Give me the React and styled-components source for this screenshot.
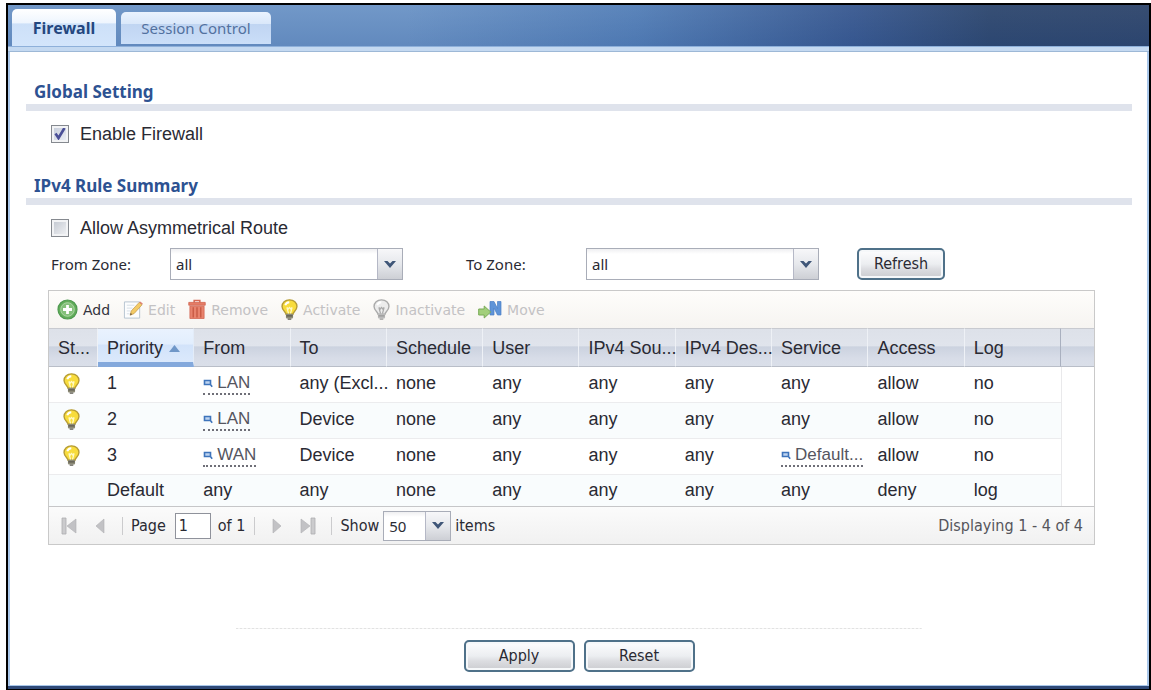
import React, { useState } from 'react';
import styled, { createGlobalStyle, css } from 'styled-components';

const tahoma = '"DejaVu Sans Condensed", "Noto Sans", sans-serif';
const verdana = '"DejaVu Sans", sans-serif';
const noto = '"Noto Sans", sans-serif';
const arial = '"Liberation Sans", Arial, sans-serif';

const GlobalStyle = createGlobalStyle`
  * { box-sizing: border-box; }
  body { margin: 0; background: #fff; color: #2a2a33; font-family: ${arial}; }
  button, input, select { font: inherit; color: inherit; margin: 0; }
`;

const Page = styled.div`
  display: flex;
  min-height: 100vh;
  padding: 3px 0 0 6px;
`;

const Frame = styled.div`
  flex: 1;
  min-width: 0;
  display: flex;
  flex-direction: column;
  border: 2px solid #000;
  border-bottom-width: 1px;
`;

const TabBar = styled.nav`
  display: flex;
  align-items: flex-end;
  gap: 5px;
  height: 41px;
  padding: 0 4px;
  background:
    linear-gradient(180deg, rgba(255, 255, 255, 0.04), rgba(20, 60, 130, 0.12)),
    linear-gradient(90deg, #6c94c6 0%, #6c94c6 35%, #5580b8 55%, #3a5a91 74%, #2f486f 86%, #2f466c 100%);
`;

const Tab = styled.button`
  border: 0;
  border-radius: 5px 5px 0 0;
  font-family: ${noto};
  text-align: center;
  cursor: pointer;
  ${(p) => p.$active ? css`
    width: 104px;
    height: 37px;
    font-size: 16px;
    font-weight: 700;
    color: #24477f;
    background: linear-gradient(180deg, #fff 0, #eef5fe 38%, #cde0f8 40%, #d3e5fb 100%);
  ` : css`
    width: 150px;
    height: 32px;
    margin-bottom: 2px;
    font-size: 15px;
    color: #52719f;
    background: linear-gradient(180deg, #eaf3fe 0, #dae8fa 36%, #c0d5f2 38%, #cadef8 100%);
  `}
`;

const TabStrip = styled.div`
  height: 6px;
  background: #c4d9f1;
  border-top: 1px solid #8eb0da;
  border-bottom: 1px solid #9db8d6;
`;

const Content = styled.main`
  flex: 1;
  padding: 0 15px 12px 16px;
  border: solid #a9c7ea;
  border-width: 0 2px 1px;
`;

const FrameFoot = styled.div`
  height: 3px;
  background: #2f4a78;
`;

const Section = styled.section`
  padding-top: 28px;
`;

const SectionTitle = styled.h2`
  margin: 0;
  padding-left: 8px;
  border-bottom: 7px solid #dfe3ec;
  font: 700 17px/24px ${noto};
  color: #2d5292;
`;

const CheckRow = styled.label`
  display: flex;
  align-items: center;
  gap: 11px;
  width: fit-content;
  height: 24px;
  margin: 11px 0 0 25px;
  font-size: 18px;
`;

const CheckBox = styled.input`
  appearance: none;
  width: 18px;
  height: 18px;
  border: 1px solid #85898f;
  box-shadow: inset 0 0 0 2px #f2f3f5;
  background: linear-gradient(135deg, #bfc5ce, #f4f5f7);
  &:checked {
    background:
      url("data:image/svg+xml,%3Csvg xmlns='http://www.w3.org/2000/svg' viewBox='0 0 16 16'%3E%3Cpath d='M3.500 7.500l3 4.500 6-10' fill='none' stroke='%234a4f97' stroke-width='2.600'/%3E%3C/svg%3E"),
      linear-gradient(135deg, #c3cad8, #eff2f8);
  }
`;

const ZoneRow = styled.div`
  display: flex;
  align-items: center;
  margin: 8px 0 0 25px;
`;

const ZoneLabel = styled.label`
  width: ${(p) => (p.$second ? 183 : 119)}px;
  padding-left: ${(p) => (p.$second ? 63 : 0)}px;
  font: 15px/20px ${noto};
`;

const SelectBox = styled.span`
  position: relative;
  display: flex;
  width: ${(p) => p.$width}px;
  height: ${(p) => p.$height}px;
`;

const NativeSelect = styled.select`
  appearance: none;
  width: 100%;
  padding: 0 28px 0 5px;
  border: 1px solid #a9adb8;
  border-radius: 0;
  background: linear-gradient(180deg, #efeff1, #fff 5px);
  font: 15px/20px ${noto};
`;

const SelectArrow = styled.span`
  position: absolute;
  inset: 1px 1px 1px auto;
  width: 25px;
  display: flex;
  align-items: center;
  justify-content: center;
  border-left: 1px solid #b5b8c6;
  background: linear-gradient(180deg, #f7f7f9 0, #e6e8ec 50%, #cdcfd5 100%);
  pointer-events: none;
`;

const Button = styled.button`
  width: ${(p) => p.$width}px;
  height: 32px;
  padding: 0;
  border: 2px solid #4f7189;
  border-radius: 5px;
  box-shadow: inset 0 0 0 2px #f6f8fa;
  background: linear-gradient(180deg, #fdfdfe 0, #eceef1 50%, #dcdde1 68%, #cbccd0 100%);
  font: 16px/20px ${tahoma};
`;

const RefreshSlot = styled.div`
  margin-left: 38px;
`;

const GridPanel = styled.div`
  margin: 10px 37px 0 22px;
  border: 1px solid #c9c9c9;
`;

const Toolbar = styled.div`
  display: flex;
  align-items: center;
  gap: 13px;
  height: 37px;
  padding-left: 8px;
  background: linear-gradient(180deg, #fefdfb, #f6f4f1);
`;

const Tool = styled.button`
  display: flex;
  align-items: center;
  gap: 5px;
  padding: 0;
  border: 0;
  background: none;
  font: 14px/20px ${verdana};
  color: #33333d;
  &:disabled { color: #c3c2c4; }
`;

const Table = styled.table`
  width: 100%;
  table-layout: fixed;
  border-collapse: separate;
  border-spacing: 0;
  font-size: 18px;
  line-height: 22px;
`;

const Col = styled.col`
  width: ${(p) => (p.$width ? `${p.$width}px` : 'auto')};
`;

const HeadCell = styled.th`
  height: 39px;
  padding: 0 0 0 9px;
  white-space: nowrap;
  text-align: left;
  font-weight: 400;
  border-top: 1px solid #c8cad0;
  border-bottom: 1px solid #b9bec8;
  border-right: 1px solid ${(p) => (p.$last ? '#a9b0bf' : '#eef1f6')};
  background: linear-gradient(180deg, #dde1e9 0, #e0e4ec 46%, #cbd2df 48%, #d8dde8 80%, #dadfe9 100%);
  ${(p) => p.$sorted && css`
    border-bottom: 5px solid #84a9dc;
    padding-top: 4px;
    border-right-color: #e3ecf8;
    background: linear-gradient(180deg, #e9f2fe 0, #e2eefd 46%, #d2e3fa 48%, #dbe9fc 100%);
  `}
  ${(p) => p.$filler && css`border-right: 0;`}
`;

const SortMark = styled.svg`
  margin-left: 6px;
  vertical-align: 2px;
`;

const Row = styled.tr`
  background: ${(p) => (p.$alt ? '#f9fcfd' : '#fff')};
`;

const Cell = styled.td`
  height: ${(p) => (p.$last ? 31 : 36)}px;
  padding: 0 0 ${(p) => (p.$last ? 1 : 3)}px 9px;
  white-space: nowrap;
  border-bottom: ${(p) => (p.$last ? '0' : '1px solid #ececee')};
  ${(p) => p.$filler && css`
    background: #fff;
    border-left: 1px solid #e9e9eb;
    border-bottom: 0;
  `}
  ${(p) => p.$icon && css`
    padding-left: 14px;
    line-height: 0;
  `}
`;

const ObjectLink = styled.a`
  display: inline-flex;
  align-items: center;
  gap: 4px;
  height: 24px;
  padding-top: 2px;
  border-bottom: 2px dotted #6f6f78;
  color: #55555f;
  font-size: 17px;
  text-decoration: none;
  vertical-align: middle;
`;

const Pager = styled.div`
  display: flex;
  align-items: center;
  height: 38px;
  padding: 0 11px 0 12px;
  border-top: 1px solid #c6c6c8;
  background: linear-gradient(180deg, #fbfbfb, #f1f1f1);
  font: 16px/20px ${tahoma};
`;

const PageButton = styled.button`
  display: flex;
  padding: 0;
  border: 0;
  background: none;
  margin-left: ${(p) => p.$gap || 0}px;
`;

const Divider = styled.span`
  width: 1px;
  height: 18px;
  background: #cbcbcd;
  margin: 0 8px 0 ${(p) => p.$gap}px;
`;

const PageInput = styled.input`
  width: 36px;
  height: 26px;
  margin: 0 7px 0 9px;
  padding: 0 3px;
  border: 1px solid #8f929b;
  background: #fff;
`;

const PageSize = styled.label`
  display: flex;
  align-items: center;
  gap: 4px;
`;

const Summary = styled.output`
  margin-left: auto;
  color: #55555b;
`;

const Actions = styled.footer`
  display: flex;
  justify-content: center;
  gap: 9px;
  margin-top: 83px;
  padding-top: 12px;
  background: repeating-linear-gradient(90deg, #e2e2e2 0 2px, #f4f4f4 2px 4px) center top / 62% 1px no-repeat;
`;

const Chevron = () => (
  <svg width="12" height="9" viewBox="0 0 12 9" aria-hidden="true">
    <path d="M0 1h3.500L6 3.500 8.500 1H12L6 8z" fill="#3f5678" />
  </svg>
);

const Bulb = ({ off, width = 17, height = 21 }) => (
  <svg width={width} height={height} viewBox="0 0 16 20" aria-hidden="true">
    <path d="M8 .8C3.800.8.9 3.500.9 7.200c0 2.300 1.300 3.700 2.500 5 .8.9 1.200 1.400 1.300 2.300h6.600c.1-.9.500-1.400 1.300-2.300 1.200-1.300 2.500-2.700 2.500-5C15.100 3.500 12.200.8 8 .8z"
      fill={off ? '#ececec' : '#f8dc3c'} stroke={off ? '#aaa' : '#b59b36'} strokeWidth="1.300" />
    <path d="M4 6c.5-1.800 1.800-2.800 3.800-2.900" fill="none" stroke="#fff" strokeWidth="1.800" />
    <path d="M5.500 8l1.600 6M10.500 8l-1.600 6M5.500 8l1.300 1.500L8 8l1.200 1.500L10.500 8" fill="none" stroke={off ? '#aaa' : '#fffac5'} strokeWidth="1.200" />
    <rect x="4.600" y="14" width="6.800" height="4.500" rx="1" fill={off ? '#bbb' : '#8c8a76'} />
    <path d="M5 16h6M6.300 19.200h3.400" stroke={off ? '#999' : '#5d5b50'} strokeWidth="1.100" />
  </svg>
);

const AddIcon = () => (
  <svg width="21" height="21" viewBox="0 0 21 21" aria-hidden="true">
    <circle cx="10.500" cy="10.500" r="9.500" fill="#62ad59" stroke="#4f9a50" strokeWidth="1.200" />
    <circle cx="10.500" cy="10.500" r="6.800" fill="#84c07a" stroke="#b9dcb2" strokeWidth=".8" />
    <path d="M10.500 6v9M6 10.500h9" stroke="#fff" strokeWidth="2.800" />
  </svg>
);

const EditIcon = () => (
  <svg width="20" height="20" viewBox="0 0 21 20" aria-hidden="true">
    <path d="M1.500 1.500h16v17h-16z" fill="#fcfdfe" stroke="#b5c3d0" />
    <path d="M4 5h8M4 8h6M4 11h4M4 14h3" stroke="#d5dde5" />
    <path d="M7.500 15.500l1.200-4.500L17 2l3 2.500-8.300 9.200z" fill="#f3cb66" stroke="#c59a4b" strokeWidth=".8" />
    <path d="M17 2l1-1 2.800 2.300L20 4.500z" fill="#dc8274" />
    <path d="M7.500 15.500l.6-2.300 1.500 1.300z" fill="#5c5042" />
  </svg>
);

const TrashIcon = () => (
  <svg width="18" height="21" viewBox="0 0 19 21" aria-hidden="true">
    <path d="M6.500 3V1h6v2" fill="none" stroke="#d66a55" strokeWidth="1.600" />
    <path d="M.8 3h17.400v3H.8z" fill="#e57c66" stroke="#cf604b" strokeWidth=".8" />
    <path d="M2 7h15v13H2z" fill="#e8836d" stroke="#d16450" strokeWidth=".8" />
    <path d="M5.500 8v11M9.500 8v11M13.500 8v11" stroke="#c4553f" strokeWidth="1.300" />
  </svg>
);

const MoveIcon = () => (
  <svg width="24" height="20" viewBox="0 0 24 20" aria-hidden="true">
    <path d="M12 1.500h4l3.500 7v-7H23V15h-3.500L16 8v7h-4z" fill="#5f94d8" stroke="#4a7fc6" strokeWidth=".7" />
    <path d="M.7 9h5.500V6l6.500 6-6.500 6v-3H.7z" fill="#a2cf7b" stroke="#78aa56" />
  </svg>
);

const ObjectIcon = () => (
  <svg width="10" height="9" viewBox="0 0 10 9" aria-hidden="true">
    <path d="M1.500 1.500h6v4h-6zM7 5l2.200 2.800" fill="#bdd3f0" stroke="#3e74bb" strokeWidth="1.600" />
  </svg>
);

const PageIcon = ({ bar, flip }) => (
  <svg width={bar ? 16 : 10} height="18" viewBox={bar ? '0 0 16 18' : '0 0 10 18'} aria-hidden="true">
    <g transform={flip ? `translate(${bar ? 16 : 10} 0) scale(-1 1)` : undefined}>
      {bar && <path d="M1 1h4v16H1z" fill="#cbcbcd" stroke="#adadb0" strokeWidth=".8" />}
      <path d={bar ? 'M15 2v14L6 9z' : 'M9 2v14L1 9z'} fill="#c2c2c5" stroke="#b0b0b3" strokeWidth=".6" />
    </g>
  </svg>
);

function Select({ id, label, options, width, height = 32 }) {
  return (
    <SelectBox $width={width} $height={height}>
      <NativeSelect id={id} aria-label={label}>
        {options.map((o) => <option key={o}>{o}</option>)}
      </NativeSelect>
      <SelectArrow><Chevron /></SelectArrow>
    </SelectBox>
  );
}

const tools = [
  { label: 'Add', icon: <AddIcon /> },
  { label: 'Edit', icon: <EditIcon />, disabled: true },
  { label: 'Remove', icon: <TrashIcon />, disabled: true },
  { label: 'Activate', icon: <Bulb />, disabled: true },
  { label: 'Inactivate', icon: <Bulb off />, disabled: true },
  { label: 'Move', icon: <MoveIcon />, disabled: true },
];

const columns = ['St...', 'Priority', 'From', 'To', 'Schedule', 'User', 'IPv4 Sou...', 'IPv4 Des...', 'Service', 'Access', 'Log'];

const object = (name) => ({ name });
const rules = [
  { active: true, cells: ['1', object('LAN'), 'any (Excl...', 'none', 'any', 'any', 'any', 'any', 'allow', 'no'] },
  { active: true, cells: ['2', object('LAN'), 'Device', 'none', 'any', 'any', 'any', 'any', 'allow', 'no'] },
  { active: true, cells: ['3', object('WAN'), 'Device', 'none', 'any', 'any', 'any', object('Default...'), 'allow', 'no'] },
  { active: false, cells: ['Default', 'any', 'any', 'none', 'any', 'any', 'any', 'any', 'deny', 'log'] },
];

function RuleTable() {
  return (
    <Table>
      <colgroup>
        <Col $width={49} />
        {columns.slice(1).map((c) => <Col key={c} />)}
        <Col $width={33} />
      </colgroup>
      <thead>
        <tr>
          {columns.map((c, i) => (
            <HeadCell key={c} $sorted={i === 1} $last={i === columns.length - 1}>
              {c}
              {i === 1 && (
                <SortMark width="11" height="7" viewBox="0 0 11 7" aria-hidden="true">
                  <path d="M5.500 0L11 7H0z" fill="#6f97c8" />
                </SortMark>
              )}
            </HeadCell>
          ))}
          <HeadCell as="td" $filler />
        </tr>
      </thead>
      <tbody>
        {rules.map((rule, r) => {
          const last = r === rules.length - 1;
          return (
            <Row key={rule.cells[0]} $alt={r % 2 === 1}>
              <Cell $icon $last={last}>{rule.active && <Bulb />}</Cell>
              {rule.cells.map((cell, i) => (
                <Cell key={i} $last={last}>
                  {typeof cell === 'string' ? cell : <ObjectLink href="#"><ObjectIcon />{cell.name}</ObjectLink>}
                </Cell>
              ))}
              <Cell $filler $last={last} />
            </Row>
          );
        })}
      </tbody>
    </Table>
  );
}

export default function App() {
  const [enabled, setEnabled] = useState(true);
  const [asymmetric, setAsymmetric] = useState(false);
  return (
    <>
      <GlobalStyle />
      <Page>
        <Frame>
          <TabBar>
            <Tab type="button" $active>Firewall</Tab>
            <Tab type="button">Session Control</Tab>
          </TabBar>
          <TabStrip />
          <Content>
            <Section>
              <SectionTitle>Global Setting</SectionTitle>
              <CheckRow>
                <CheckBox type="checkbox" checked={enabled} onChange={(e) => setEnabled(e.target.checked)} />
                Enable Firewall
              </CheckRow>
            </Section>
            <Section>
              <SectionTitle>IPv4 Rule Summary</SectionTitle>
              <CheckRow>
                <CheckBox type="checkbox" checked={asymmetric} onChange={(e) => setAsymmetric(e.target.checked)} />
                Allow Asymmetrical Route
              </CheckRow>
              <ZoneRow>
                <ZoneLabel htmlFor="from-zone">From Zone:</ZoneLabel>
                <Select id="from-zone" options={['all']} width={233} />
                <ZoneLabel $second htmlFor="to-zone">To Zone:</ZoneLabel>
                <Select id="to-zone" options={['all']} width={233} />
                <RefreshSlot><Button type="button" $width={88}>Refresh</Button></RefreshSlot>
              </ZoneRow>
              <GridPanel>
                <Toolbar>
                  {tools.map((t) => (
                    <Tool key={t.label} type="button" disabled={t.disabled}>{t.icon}{t.label}</Tool>
                  ))}
                </Toolbar>
                <RuleTable />
                <Pager>
                  <PageButton type="button" aria-label="First page"><PageIcon bar /></PageButton>
                  <PageButton type="button" aria-label="Previous page" $gap={18}><PageIcon /></PageButton>
                  <Divider $gap={17} />
                  <label htmlFor="page-number">Page</label>
                  <PageInput id="page-number" defaultValue="1" />
                  of 1
                  <Divider $gap={9} />
                  <PageButton type="button" aria-label="Next page" $gap={9}><PageIcon flip /></PageButton>
                  <PageButton type="button" aria-label="Last page" $gap={18}><PageIcon bar flip /></PageButton>
                  <Divider $gap={15} />
                  <PageSize htmlFor="page-size">
                    Show
                    <Select id="page-size" options={['50']} width={68} height={30} />
                    items
                  </PageSize>
                  <Summary>Displaying 1 - 4 of 4</Summary>
                </Pager>
              </GridPanel>
            </Section>
            <Actions>
              <Button type="button" $width={111}>Apply</Button>
              <Button type="button" $width={111}>Reset</Button>
            </Actions>
          </Content>
          <FrameFoot />
        </Frame>
      </Page>
    </>
  );
}
